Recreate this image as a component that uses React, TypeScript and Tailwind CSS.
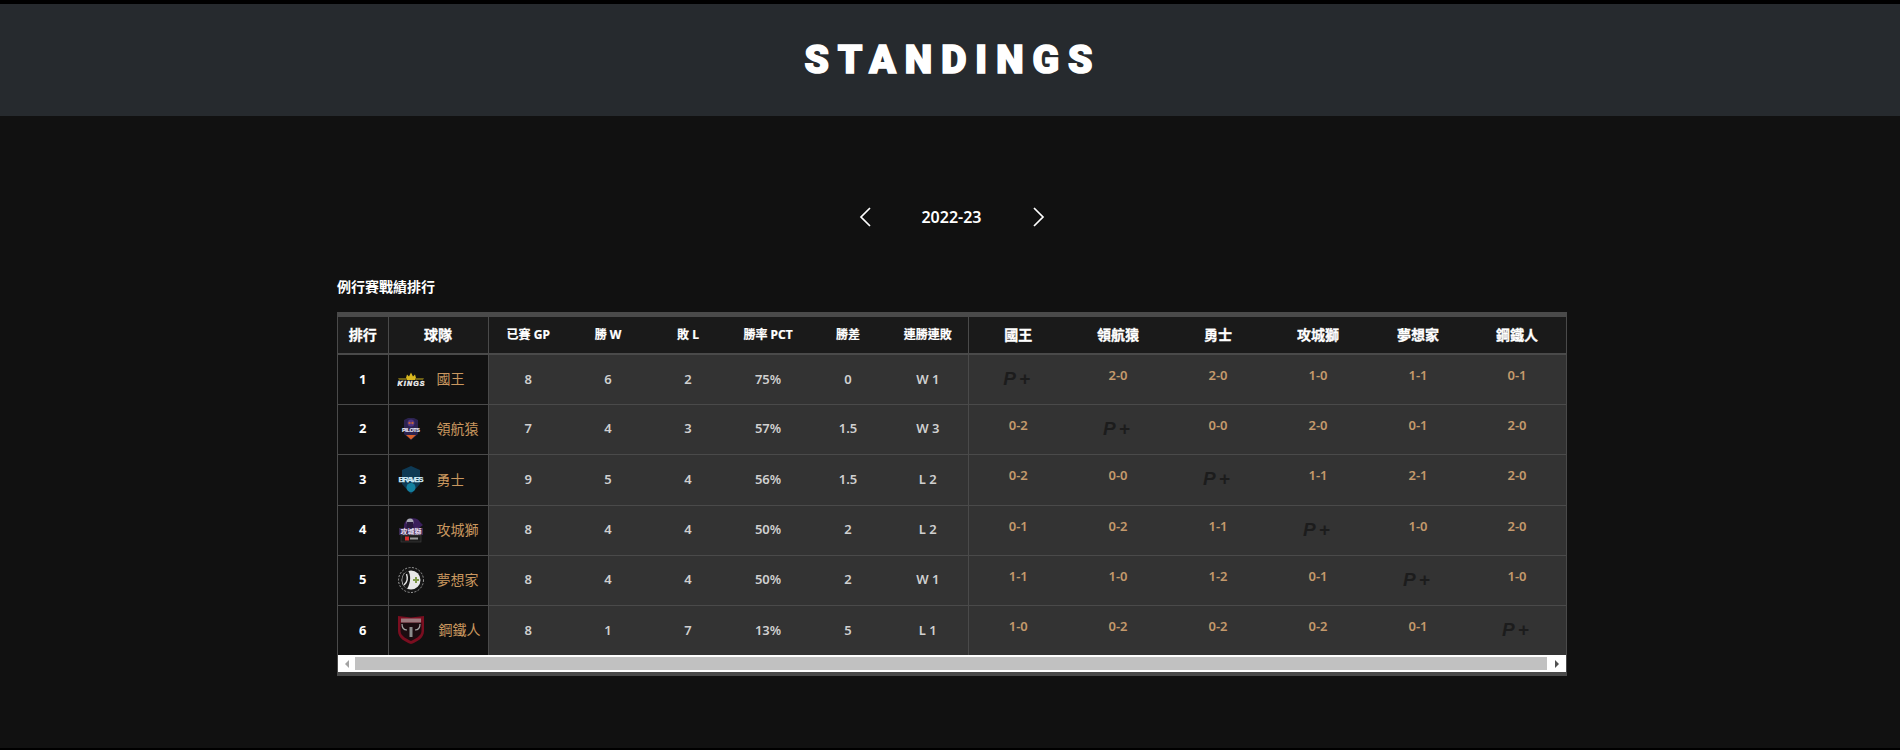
import React from 'react';

const sans = "font-['Noto_Sans','Noto_Sans_CJK_TC',sans-serif]";

const KingsLogo = () => (
  <svg width="28" height="14" viewBox="0 0 28 14">
    <path d="M9 6 L10 2.5 L12 4.5 L14 0.5 L16 4.5 L18 2.5 L19 6 L18 8 H10 Z" fill="#d9b81f" />
    <path d="M1 6 H9 L10 8 H2 Z M27 6 H19 L18 8 H26 Z" fill="#6f6216" />
    <text x="14" y="13.5" textAnchor="middle" fontFamily="Liberation Sans" fontSize="7" fontWeight="700" fontStyle="italic" fill="#f2f2f2" stroke="#f2f2f2" strokeWidth="0.4" textLength="27">
      KINGS
    </text>
  </svg>
);

const PilotsLogo = () => (
  <svg width="20" height="24" viewBox="0 0 20 24">
    <path d="M3 3 L7 1 H13 L17 3 V17 L10 23 L3 17 Z" fill="#2c2350" />
    <circle cx="10" cy="6" r="3.5" fill="#4d3585" />
    <circle cx="8.5" cy="6" r="1.2" fill="#c0623a" />
    <circle cx="11.5" cy="6" r="1.2" fill="#c0623a" />
    <text x="10" y="15" textAnchor="middle" fontFamily="Liberation Sans" fontSize="5.5" fontWeight="700" fill="#e6e6f4" stroke="#e6e6f4" strokeWidth="0.2" textLength="18">
      PILOTS
    </text>
    <path d="M5 18 H15 L10 22.5 Z" fill="#d8622a" />
  </svg>
);

const BravesLogo = () => (
  <svg width="26" height="30" viewBox="0 0 26 30">
    <path d="M4 5 L13 1 L22 5 V19 L13 29 L4 19 Z" fill="#0e3a55" />
    <text x="13" y="16.5" textAnchor="middle" fontFamily="Liberation Sans" fontSize="8" fontWeight="700" fill="#cfeaf7" stroke="#cfeaf7" strokeWidth="0.25" textLength="25">
      BRAVES
    </text>
    <circle cx="13" cy="22.5" r="4.5" fill="#14809f" />
  </svg>
);

const LionsLogo = () => (
  <svg width="26" height="28" viewBox="0 0 26 28">
    <path d="M6 10 C6 1 20 0 22 6 L25 9 L21 12 H6 Z" fill="#3a1f5c" />
    <circle cx="12" cy="6" r="3.5" fill="#a9a9b5" />
    <path d="M9 6 C9 12 8 13 7 13 H17 C15 12 15 9 15 6 Z" fill="#26183c" />
    <rect x="1" y="12" width="24" height="7" fill="#3a2a50" />
    <text x="13" y="18" textAnchor="middle" fontFamily="Noto Sans CJK TC" fontSize="7" fontWeight="700" fill="#e6dcf0">
      攻城獅
    </text>
    <rect x="3" y="19" width="20" height="7" fill="#1c1c1c" stroke="#444" strokeWidth="0.6" />
    <rect x="7" y="20.5" width="4" height="4" fill="#d62d2d" />
    <rect x="12" y="21.5" width="8" height="2" fill="#999" />
  </svg>
);

const DreamersLogo = () => (
  <svg width="26" height="26" viewBox="0 0 26 26">
    <circle cx="13" cy="13" r="12.5" fill="#161616" stroke="#9a9a9a" strokeWidth="1" strokeDasharray="2 1.5" />
    <circle cx="13" cy="13" r="9.5" fill="#e8e8e8" />
    <path d="M10 3.5 C13 8 13 15 9 22 C4 19 1 9 10 3.5 Z" fill="#161616" />
    <path d="M8.5 7 C10 11 9.5 15 6 18" stroke="#e8e8e8" strokeWidth="1.4" fill="none" />
    <path d="M18 10v6M15 13h6" stroke="#7f9a4a" strokeWidth="2" />
  </svg>
);

const SteelersLogo = () => (
  <svg width="28" height="30" viewBox="0 0 28 30">
    <path d="M1 1 L14 2.5 L27 1 V16 C27 23 20 27 14 29 C8 27 1 23 1 16 Z" fill="#7a0e20" />
    <path d="M3.5 7.5 H24.5 V16 C24.5 21 18 24 14 26 C10 24 3.5 21 3.5 16 Z" fill="#1c0c10" />
    <rect x="4" y="3.5" width="20" height="4" fill="#9c7a7e" />
    <path d="M5 9 C5 13 7 15 10 15 M23 9 C23 13 21 15 18 15" stroke="#a8a8a8" strokeWidth="1.2" fill="none" />
    <path d="M12.5 12 H15.5 V22 H12.5 Z" fill="#8c8c8c" />
  </svg>
);

const PlusMark = () => (
  <span className="inline-block translate-y-[4px] font-['Liberation_Sans',sans-serif] text-[19px] font-bold italic leading-none tracking-[3px] text-[#1c1c1c]">
    P+
  </span>
);

const teams = [
  { rank: 1, name: '國王', logo: <KingsLogo />, gp: 8, w: 6, l: 2, pct: '75%', gb: '0', streak: 'W 1', h2h: ['', '2-0', '2-0', '1-0', '1-1', '0-1'] },
  { rank: 2, name: '領航猿', logo: <PilotsLogo />, gp: 7, w: 4, l: 3, pct: '57%', gb: '1.5', streak: 'W 3', h2h: ['0-2', '', '0-0', '2-0', '0-1', '2-0'] },
  { rank: 3, name: '勇士', logo: <BravesLogo />, gp: 9, w: 5, l: 4, pct: '56%', gb: '1.5', streak: 'L 2', h2h: ['0-2', '0-0', '', '1-1', '2-1', '2-0'] },
  { rank: 4, name: '攻城獅', logo: <LionsLogo />, gp: 8, w: 4, l: 4, pct: '50%', gb: '2', streak: 'L 2', h2h: ['0-1', '0-2', '1-1', '', '1-0', '2-0'] },
  { rank: 5, name: '夢想家', logo: <DreamersLogo />, gp: 8, w: 4, l: 4, pct: '50%', gb: '2', streak: 'W 1', h2h: ['1-1', '1-0', '1-2', '0-1', '', '1-0'] },
  { rank: 6, name: '鋼鐵人', logo: <SteelersLogo />, gp: 8, w: 1, l: 7, pct: '13%', gb: '5', streak: 'L 1', h2h: ['1-0', '0-2', '0-2', '0-2', '0-1', ''] },
];

const statHeaders = ['已賽 GP', '勝 W', '敗 L', '勝率 PCT', '勝差', '連勝連敗'];
const h2hHeaders = ['國王', '領航猿', '勇士', '攻城獅', '夢想家', '鋼鐵人'];

const App: React.FC = () => {
  return (
    <div className={`min-h-[750px] border-b-2 border-black bg-[#111111] text-white ${sans}`}>
      <div className="border-t-4 border-black bg-[#262a2e]">
        <h1 className="flex h-[112px] items-center justify-center pl-[6px] font-['Roboto',sans-serif] text-[39px] font-black tracking-[9px] [-webkit-text-stroke:1.6px_white]">
          STANDINGS
        </h1>
      </div>

      <div className="mt-[89px] flex items-center justify-center gap-[39px] pl-[3px]">
        <svg width="12" height="20" viewBox="0 0 12 20" fill="none" stroke="white" strokeWidth="1.7">
          <path d="M11 1 L2 10 L11 19" />
        </svg>
        <span className="w-[84px] text-center text-base font-semibold">2022-23</span>
        <svg width="12" height="20" viewBox="0 0 12 20" fill="none" stroke="white" strokeWidth="1.7">
          <path d="M1 1 L10 10 L1 19" />
        </svg>
      </div>

      <div className="ml-[337px] w-[1230px]">
        <p className="mt-[48px] h-[20px] text-sm font-semibold leading-[20px]">例行賽戰績排行</p>
        <div className="mt-[15px] border-x border-t-[5px] border-b-[4px] border-[#4a4a4a] bg-[#333333]">
          <table className="w-full table-fixed border-collapse">
            <colgroup>
              <col className="w-[50px]" />
              <col className="w-[100px]" />
              {statHeaders.map((h) => (
                <col key={h} className="w-[80px]" />
              ))}
              {h2hHeaders.map((h, i) => (
                <col key={h} className={i === 5 ? 'w-[98px]' : 'w-[100px]'} />
              ))}
            </colgroup>
            <thead>
              <tr className="h-[37px] border-b-2 border-[#4a4a4a] bg-[#1a1a1a]">
                <th className="border-r border-[#4a4a4a] text-sm font-bold [-webkit-text-stroke:0.3px_white]">排行</th>
                <th className="border-r border-[#4a4a4a] text-sm font-bold [-webkit-text-stroke:0.3px_white]">球隊</th>
                {statHeaders.map((h, i) => (
                  <th key={h} className={`text-xs font-bold [-webkit-text-stroke:0.2px_white] ${i === 5 ? 'border-r border-[#4a4a4a]' : ''}`}>
                    {h}
                  </th>
                ))}
                {h2hHeaders.map((h) => (
                  <th key={h} className="text-sm font-bold [-webkit-text-stroke:0.3px_white]">
                    {h}
                  </th>
                ))}
              </tr>
            </thead>
            <tbody>
              {teams.map((t, idx) => (
                <tr key={t.rank} className={`${t.rank === 3 ? 'h-[51px]' : 'h-[50px]'} ${idx < 5 ? 'border-b border-[#4a4a4a]' : ''}`}>
                  <td className="border-r border-[#4a4a4a] bg-[#111111] text-center text-[13px] font-bold">{t.rank}</td>
                  <td className="border-r border-[#4a4a4a] bg-[#111111]">
                    <div className="flex items-center">
                      <span className="flex w-[48px] shrink-0 justify-center pr-[3px]">{t.logo}</span>
                      <span className={`text-sm text-[#c9975f] ${t.rank === 6 ? 'pl-[2px]' : ''}`}>{t.name}</span>
                    </div>
                  </td>
                  {[t.gp, t.w, t.l, t.pct, t.gb, t.streak].map((v, i) => (
                    <td
                      key={i}
                      className={`text-center text-[13px] font-semibold text-[#d0d0d0] ${i === 5 ? 'border-r border-[#4a4a4a]' : ''}`}
                    >
                      {v}
                    </td>
                  ))}
                  {t.h2h.map((r, i) => (
                    <td key={i} className="pb-[7px] text-center text-[13px] font-semibold text-[#c49a6c]">
                      {r === '' ? <PlusMark /> : r}
                    </td>
                  ))}
                </tr>
              ))}
            </tbody>
          </table>
          <div className="flex h-[17px] items-center bg-white">
            <span className="flex w-[17px] shrink-0 justify-center">
              <span className="h-0 w-0 border-y-4 border-r-4 border-y-transparent border-r-[#a3a3a3]" />
            </span>
            <div className="h-[13px] flex-1 bg-[#c1c1c1]" />
            <span className="flex w-[19px] shrink-0 justify-center">
              <span className="h-0 w-0 border-y-4 border-l-4 border-y-transparent border-l-[#505050]" />
            </span>
          </div>
        </div>
      </div>
    </div>
  );
};

export default App;
